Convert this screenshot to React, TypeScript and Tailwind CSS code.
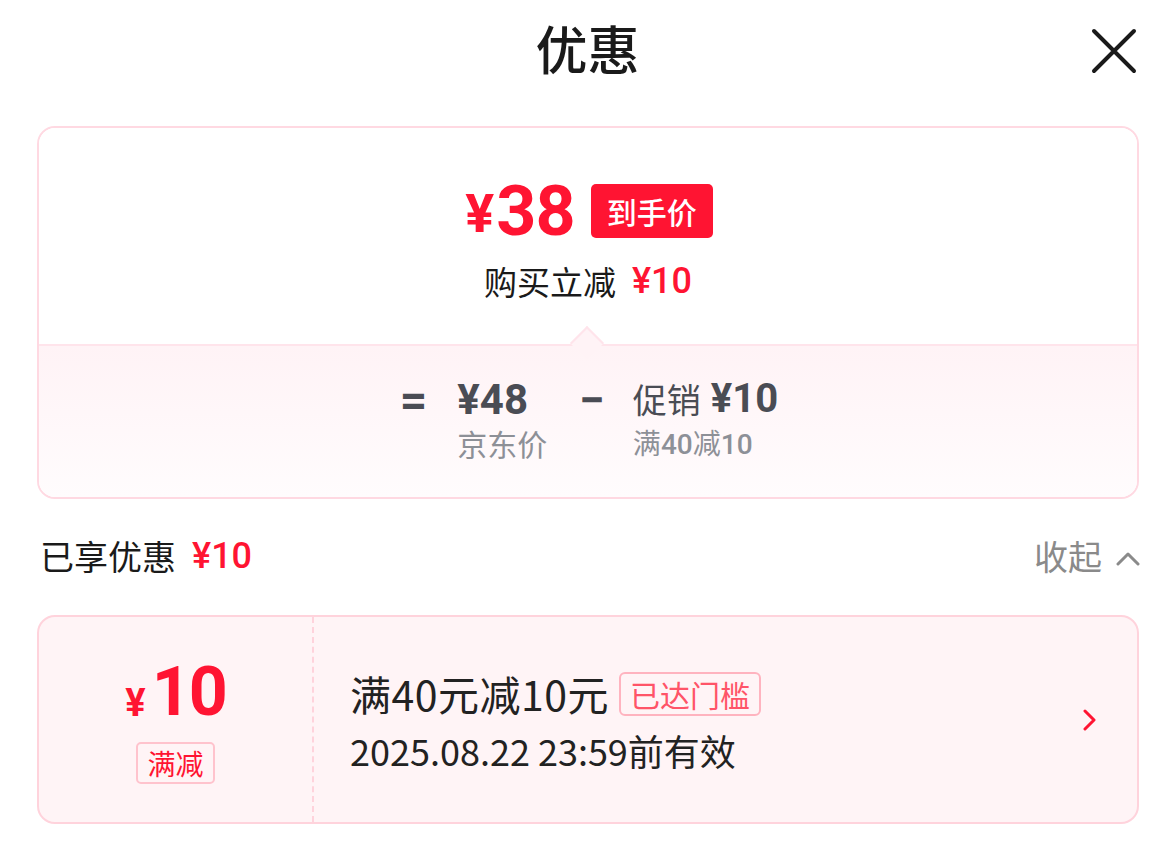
import React from "react";

const cjk = { fontFamily: '"Noto Sans CJK SC", "Noto Sans", sans-serif' };
const num = { fontFamily: 'Roboto, "Noto Sans CJK SC", sans-serif' };

export default function App() {
  return (
    <div className="w-[1171px] h-[860px] bg-white text-[#1a1a1a] overflow-hidden" style={cjk}>
      {/* header */}
      <div className="relative h-[100px] flex items-center justify-center">
        <div className="text-[52px] leading-none font-medium -mt-[4px] ml-[4px]">优惠</div>
        <svg className="absolute right-[34px] top-[28px]" width="46" height="46" viewBox="0 0 46 46">
          <path d="M3 3 L43 43 M43 3 L3 43" stroke="#1a1a1a" strokeWidth="4" strokeLinecap="round" />
        </svg>
      </div>

      {/* price card */}
      <div className="ml-[37px] mt-[26px] w-[1102px] h-[373px] border-2 border-[#ffd9e2] rounded-[18px] overflow-hidden flex flex-col">
        <div className="relative h-[216px] bg-white flex flex-col items-center">
          <div className="flex items-center mt-[55px] h-[56px] ml-[2px]">
            <span className="text-[#ff1432] font-bold text-[54px] leading-none mt-[6px]" style={num}>¥</span>
            <span className="text-[#ff1432] font-bold text-[70px] leading-none ml-[2px] tracking-[-1px]" style={num}>38</span>
            <span className="ml-[16px] bg-[#ff1432] text-white rounded-[5px] h-[54px] px-[16px] flex items-center text-[30px] leading-none font-medium">到手价</span>
          </div>
          <div className="flex items-center mt-[24px]">
            <span className="text-[33px] leading-none">购买立减</span>
            <span className="ml-[16px] text-[#ff1432] text-[36px] leading-none font-medium" style={num}>¥10</span>
          </div>
          <div className="absolute left-[536px] bottom-[-11px] w-[24px] h-[24px] rotate-45 bg-[#fff3f6] border-l-2 border-t-2 border-[#ffe4eb]" />
        </div>
        <div className="flex-1 border-t-2 border-[#ffe4eb] bg-gradient-to-b from-[#fff3f6] to-[#fffcfd] flex justify-center pt-[33px]">
          <div className="flex items-start ml-[2px]">
            <span className="text-[48px] leading-none font-bold text-[#4a4c54] -mt-[2px]" style={num}>=</span>
            <div className="flex flex-col ml-[30px]">
              <span className="text-[42px] leading-none font-bold text-[#4a4c54]" style={num}>¥48</span>
              <span className="text-[30px] leading-none text-[#8d9097] mt-[7px]">京东价</span>
            </div>
            <span className="text-[46px] leading-none font-bold text-[#4a4c54] ml-[32px] -mt-[2px]" style={num}>−</span>
            <div className="flex flex-col ml-[28px]">
              <span className="text-[40px] leading-none text-[#4a4c54] flex items-center">
                <span className="text-[34px]">促销</span>
                <span className="ml-[10px] font-bold" style={num}>¥10</span>
              </span>
              <span className="text-[28px] leading-none text-[#8d9097] mt-[9px] flex items-baseline">
                满<span className="font-medium" style={num}>40</span>减<span className="font-medium" style={num}>10</span>
              </span>
            </div>
          </div>
        </div>
      </div>

      {/* enjoyed row */}
      <div className="flex items-center justify-between ml-[40px] w-[1100px] mt-[37px] h-[40px]">
        <div className="flex items-center">
          <span className="text-[34px] leading-none">已享优惠</span>
          <span className="ml-[16px] text-[#ff1432] text-[36px] leading-none font-medium" style={num}>¥10</span>
        </div>
        <div className="flex items-center text-[#8a8a8a]">
          <span className="text-[34px] leading-none">收起</span>
          <svg className="ml-[14px] mt-[6px]" width="24" height="16" viewBox="0 0 24 16">
            <path d="M2 13 L12 3 L22 13" stroke="#8a8a8a" strokeWidth="3" fill="none" strokeLinecap="round" strokeLinejoin="round" />
          </svg>
        </div>
      </div>

      {/* coupon */}
      <div className="ml-[37px] mt-[39px] w-[1102px] h-[209px] border-2 border-[#ffd3dc] rounded-[18px] bg-[#fff4f6] flex">
        <div className="w-[275px] border-r-2 border-dashed border-[#ffd3dc] flex flex-col items-center justify-center">
          <div className="flex items-end mt-[2px]">
            <span className="text-[#ff1432] font-bold text-[38px] leading-none mb-[4px]" style={num}>¥</span>
            <span className="text-[#ff1432] font-bold text-[68px] leading-none ml-[6px] tracking-[-2px]" style={num}>10</span>
          </div>
          <div className="mt-[16px] border-2 border-[#ffc3cd] rounded-[5px] px-[9px] h-[42px] flex items-center text-[#ff1432] text-[28px] leading-none">满减</div>
        </div>
        <div className="flex-1 flex items-center justify-between pl-[36px] pr-[40px]">
          <div className="flex flex-col">
            <div className="flex items-center">
              <span className="text-[41px] leading-none text-[#222] tracking-[0.5px]">满40元减10元</span>
              <span className="ml-[10px] border-2 border-[#ffb3bf] rounded-[6px] h-[44px] px-[9px] flex items-center text-[#ff5468] text-[30px] leading-none">已达门槛</span>
            </div>
            <div className="mt-[16px] text-[36px] leading-none text-[#222]">2025.08.22 23:59前有效</div>
          </div>
          <svg width="14" height="22" viewBox="0 0 14 22">
            <path d="M2 2 L11 11 L2 20" stroke="#ff1432" strokeWidth="3" fill="none" strokeLinecap="round" strokeLinejoin="round" />
          </svg>
        </div>
      </div>
    </div>
  );
}
